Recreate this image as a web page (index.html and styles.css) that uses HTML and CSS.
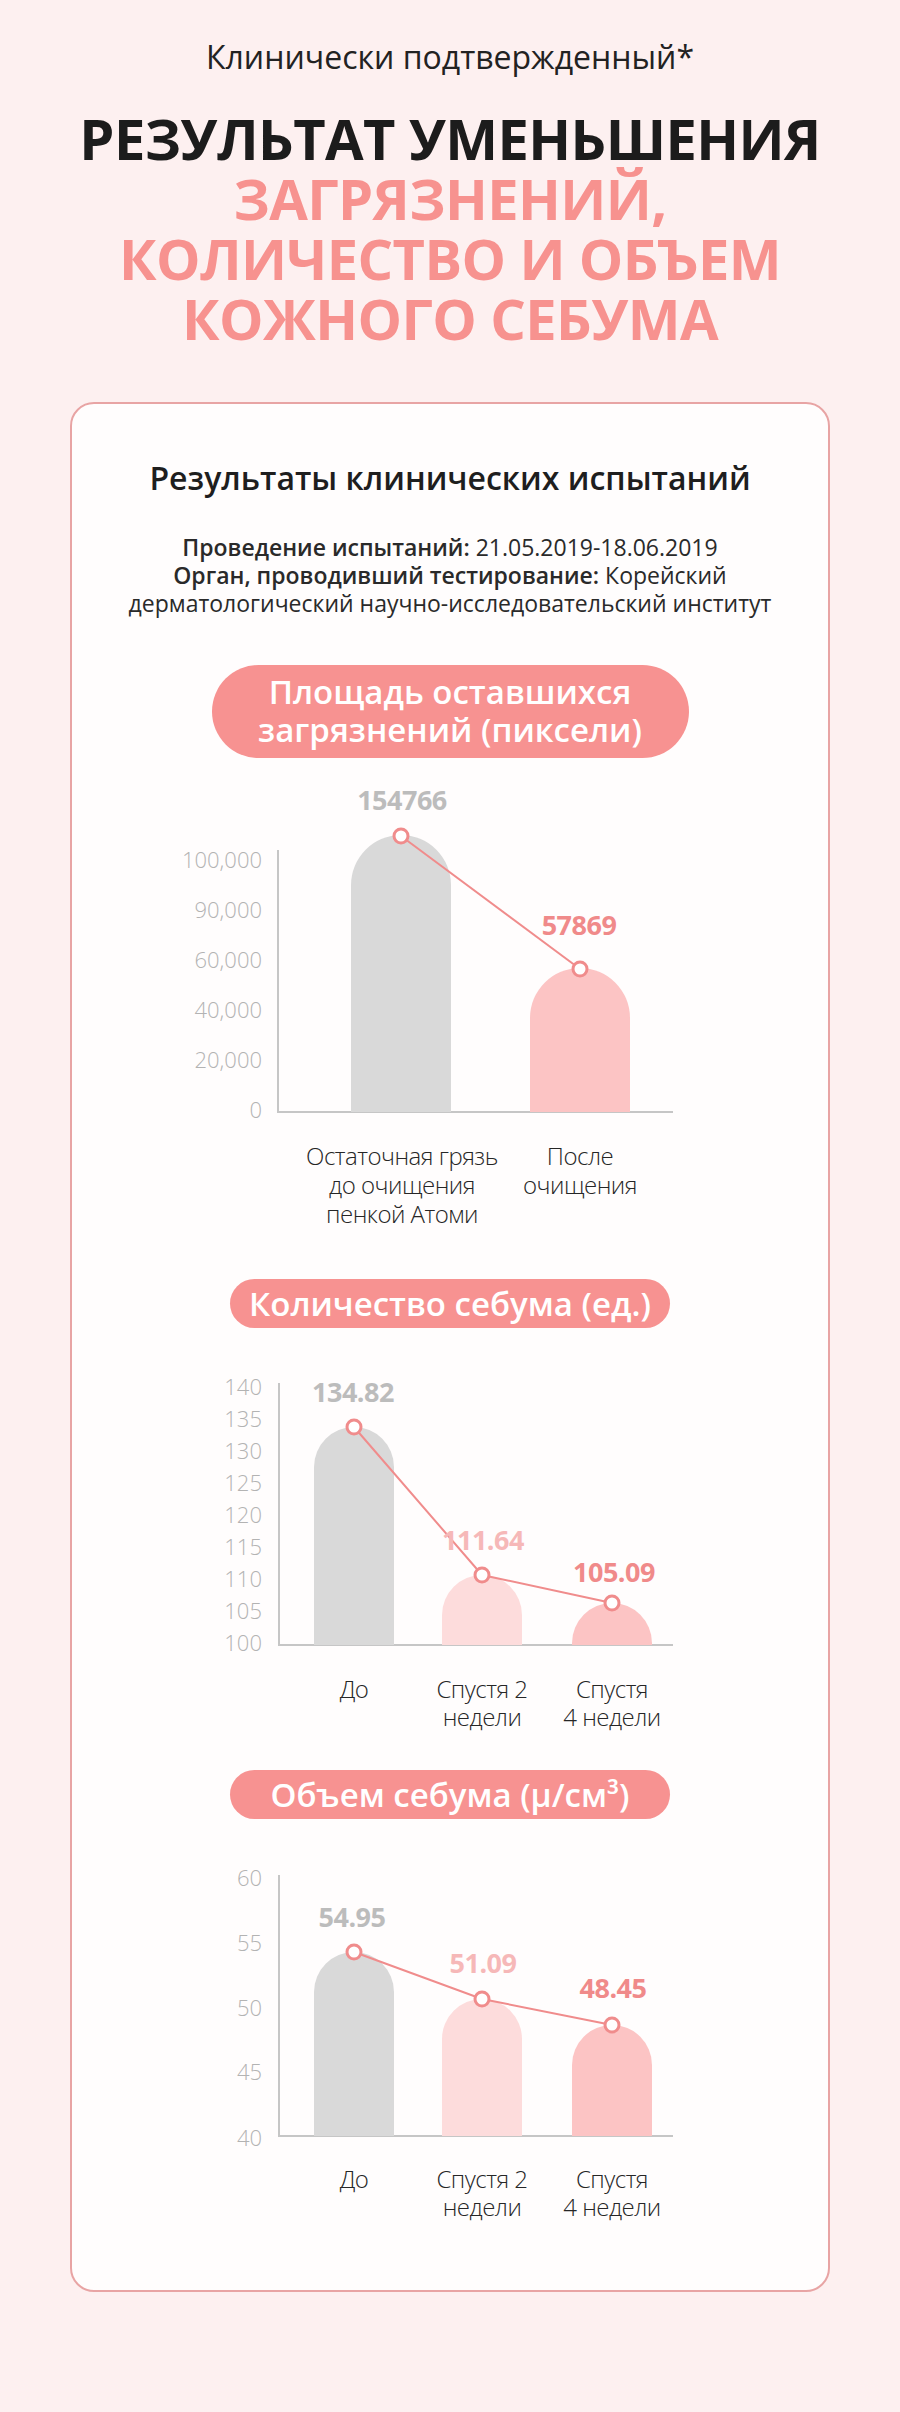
FILE: index.html
```html
<!DOCTYPE html>
<html lang="ru">
<head>
<meta charset="utf-8">
<title>Клинически подтвержденный</title>
<link rel="stylesheet" href="styles.css">
</head>
<body>
<header class="hero">
  <p class="eyebrow">Клинически подтвержденный*</p>
  <h1 class="title">
    <span class="title-dark">РЕЗУЛЬТАТ УМЕНЬШЕНИЯ</span>
    <span class="title-pink">ЗАГРЯЗНЕНИЙ,<br>КОЛИЧЕСТВО И ОБЪЕМ<br>КОЖНОГО СЕБУМА</span>
  </h1>
</header>

<section class="card">
  <h2 class="card-title">Результаты клинических испытаний</h2>
  <p class="info">
    <b>Проведение испытаний:</b> 21.05.2019-18.06.2019<br>
    <b>Орган, проводивший тестирование:</b> Корейский<br>
    дерматологический научно-исследовательский институт
  </p>

  <div class="pill pill-wide">Площадь оставшихся<br>загрязнений (пиксели)</div>
  <svg class="chart chart-1" viewBox="72 758 756 521" width="756" height="521">
    <g class="axis">
      <line x1="278" y1="850" x2="278" y2="1112"/>
      <line x1="277" y1="1112" x2="673" y2="1112"/>
    </g>
    <g class="ylabels">
      <text x="262" y="868">100,000</text>
      <text x="262" y="918">90,000</text>
      <text x="262" y="968">60,000</text>
      <text x="262" y="1018">40,000</text>
      <text x="262" y="1068">20,000</text>
      <text x="262" y="1118">0</text>
    </g>
    <path class="bar bar-gray" d="M351 1112 V885 A50 50 0 0 1 451 885 V1112 Z"/>
    <path class="bar bar-pink" d="M530 1112 V1018 A50 50 0 0 1 630 1018 V1112 Z"/>
    <polyline class="trend" points="401,836 580,969"/>
    <circle class="dot" cx="401" cy="836" r="7"/>
    <circle class="dot" cx="580" cy="969" r="7"/>
    <text class="val val-gray" x="402" y="810">154766</text>
    <text class="val val-pink" x="579" y="935">57869</text>
    <g class="cats">
      <text x="402" y="1165">Остаточная грязь</text>
      <text x="402" y="1194">до очищения</text>
      <text x="402" y="1223">пенкой Атоми</text>
      <text x="580" y="1165">После</text>
      <text x="580" y="1194">очищения</text>
    </g>
  </svg>

  <div class="pill">Количество себума (ед.)</div>
  <svg class="chart chart-2" viewBox="72 1328 756 442" width="756" height="442">
    <g class="axis">
      <line x1="279" y1="1383" x2="279" y2="1645"/>
      <line x1="278" y1="1645" x2="673" y2="1645"/>
    </g>
    <g class="ylabels">
      <text x="262" y="1395">140</text>
      <text x="262" y="1427">135</text>
      <text x="262" y="1459">130</text>
      <text x="262" y="1491">125</text>
      <text x="262" y="1523">120</text>
      <text x="262" y="1555">115</text>
      <text x="262" y="1587">110</text>
      <text x="262" y="1619">105</text>
      <text x="262" y="1651">100</text>
    </g>
    <path class="bar bar-gray" d="M314 1645 V1467 A40 40 0 0 1 394 1467 V1645 Z"/>
    <path class="bar bar-light" d="M442 1645 V1615 A40 40 0 0 1 522 1615 V1645 Z"/>
    <path class="bar bar-pink" d="M572 1645 V1643 A40 40 0 0 1 652 1643 V1645 Z"/>
    <polyline class="trend" points="354,1427 482,1575 612,1603"/>
    <circle class="dot" cx="354" cy="1427" r="7"/>
    <circle class="dot" cx="482" cy="1575" r="7"/>
    <circle class="dot" cx="612" cy="1603" r="7"/>
    <text class="val val-gray" x="353" y="1402">134.82</text>
    <text class="val val-light" x="483" y="1550">111.64</text>
    <text class="val val-pink" x="614" y="1582">105.09</text>
    <g class="cats">
      <text x="354" y="1698">До</text>
      <text x="482" y="1698">Спустя 2</text>
      <text x="482" y="1726">недели</text>
      <text x="612" y="1698">Спустя</text>
      <text x="612" y="1726">4 недели</text>
    </g>
  </svg>

  <div class="pill">Объем себума (µ/см³)</div>
  <svg class="chart chart-3" viewBox="72 1819 756 471" width="756" height="471">
    <g class="axis">
      <line x1="279" y1="1875" x2="279" y2="2136"/>
      <line x1="278" y1="2136" x2="673" y2="2136"/>
    </g>
    <g class="ylabels">
      <text x="262" y="1886">60</text>
      <text x="262" y="1951">55</text>
      <text x="262" y="2016">50</text>
      <text x="262" y="2080">45</text>
      <text x="262" y="2146">40</text>
    </g>
    <path class="bar bar-gray" d="M314 2136 V1992 A40 40 0 0 1 394 1992 V2136 Z"/>
    <path class="bar bar-light" d="M442 2136 V2039 A40 40 0 0 1 522 2039 V2136 Z"/>
    <path class="bar bar-pink" d="M572 2136 V2065 A40 40 0 0 1 652 2065 V2136 Z"/>
    <polyline class="trend" points="354,1952 482,1999 612,2025"/>
    <circle class="dot" cx="354" cy="1952" r="7"/>
    <circle class="dot" cx="482" cy="1999" r="7"/>
    <circle class="dot" cx="612" cy="2025" r="7"/>
    <text class="val val-gray" x="352" y="1927">54.95</text>
    <text class="val val-light" x="483" y="1973">51.09</text>
    <text class="val val-pink" x="613" y="1998">48.45</text>
    <g class="cats">
      <text x="354" y="2188">До</text>
      <text x="482" y="2188">Спустя 2</text>
      <text x="482" y="2216">недели</text>
      <text x="612" y="2188">Спустя</text>
      <text x="612" y="2216">4 недели</text>
    </g>
  </svg>
</section>
</body>
</html>
```
FILE: styles.css
```css
html, body {
  margin: 0;
  padding: 0;
}
body {
  background: #fdf0f0;
  font-family: "Open Sans", "Noto Sans", sans-serif;
  color: #222;
  width: 900px;
  min-height: 2412px;
}
.hero {
  text-align: center;
}
.eyebrow {
  margin: 0;
  padding-top: 37px;
  font-size: 32px;
  line-height: 40px;
  font-weight: 400;
  color: #222;
}
.title {
  margin: 31px 0 0;
  font-size: 56px;
  line-height: 60px;
  font-weight: 700;
  letter-spacing: -0.6px;
}
.title-dark,
.title-pink {
  display: block;
}
.title-dark {
  color: #1c1c1c;
}
.title-pink {
  color: #f7928f;
}
.card {
  box-sizing: border-box;
  width: 760px;
  margin: 54px auto 0;
  border: 2px solid #e8a4a4;
  border-radius: 24px;
  background: #fffdfd;
  padding: 54px 0 0;
  text-align: center;
}
.card-title {
  margin: 0;
  font-size: 32px;
  line-height: 40px;
  font-weight: 600;
  color: #1e1e1e;
}
.info {
  margin: 35px 0 0;
  font-size: 23px;
  line-height: 28px;
  font-weight: 400;
  color: #2a2a2a;
}
.info b {
  font-weight: 600;
}
.pill {
  box-sizing: border-box;
  width: 440px;
  height: 49px;
  margin: 0 auto;
  border-radius: 25px;
  background: #f79291;
  color: #fff;
  font-size: 33px;
  line-height: 49px;
  font-weight: 600;
  white-space: nowrap;
}
.pill-wide {
  width: 477px;
  height: 93px;
  margin-top: 48px;
  padding-top: 8px;
  border-radius: 47px;
  line-height: 38px;
}
.chart {
  display: block;
}
.axis line {
  stroke: #c6c6c6;
  stroke-width: 2;
}
.ylabels text {
  font-family: "Open Sans", sans-serif;
  font-size: 22px;
  font-weight: 300;
  fill: #b3b3b3;
  text-anchor: end;
}
.bar-gray { fill: #d9d9d9; }
.bar-light { fill: #fddcdc; }
.bar-pink { fill: #fcc4c4; }
.trend {
  fill: none;
  stroke: #f08c8c;
  stroke-width: 2;
}
.dot {
  fill: #fff;
  stroke: #f08c8c;
  stroke-width: 3;
}
.val {
  font-family: "Open Sans", sans-serif;
  font-size: 27px;
  font-weight: 700;
  text-anchor: middle;
  letter-spacing: -0.5px;
}
.val-gray { fill: #bcbcbc; }
.val-light { fill: #f6b8b8; }
.val-pink { fill: #f08a8a; }
.cats text {
  font-family: "Open Sans", sans-serif;
  font-size: 24px;
  font-weight: 300;
  fill: #262626;
  text-anchor: middle;
  letter-spacing: -0.5px;
}
```
